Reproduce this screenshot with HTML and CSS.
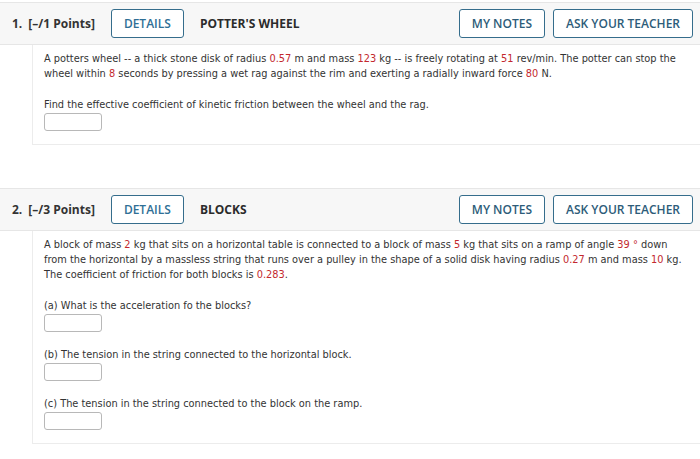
FILE: index.html
```html
<!DOCTYPE html>
<html>
<head>
<meta charset="utf-8">
<link rel="stylesheet" href="styles.css">
</head>
<body>
<div class="page">
  <section class="question">
    <header class="q-head">
      <span class="q-num">1.</span>
      <span class="q-points">[–/1 Points]</span>
      <button class="btn btn-details">DETAILS</button>
      <span class="q-title">POTTER'S WHEEL</span>
      <span class="spacer"></span>
      <button class="btn">MY NOTES</button>
      <button class="btn">ASK YOUR TEACHER</button>
    </header>
    <div class="q-body">
      <p class="txt">A potters wheel -- a thick stone disk of radius <span class="v">0.57</span> m and mass <span class="v">123</span> kg -- is freely rotating at <span class="v">51</span> rev/min. The potter can stop the wheel within <span class="v">8</span> seconds by pressing a wet rag against the rim and exerting a radially inward force <span class="v">80</span> N.</p>
      <div class="part part-first">
        <p class="txt">Find the effective coefficient of kinetic friction between the wheel and the rag.</p>
        <div class="answer"></div>
      </div>
    </div>
  </section>

  <section class="question q2">
    <header class="q-head">
      <span class="q-num">2.</span>
      <span class="q-points">[–/3 Points]</span>
      <button class="btn btn-details">DETAILS</button>
      <span class="q-title">BLOCKS</span>
      <span class="spacer"></span>
      <button class="btn">MY NOTES</button>
      <button class="btn">ASK YOUR TEACHER</button>
    </header>
    <div class="q-body">
      <p class="txt">A block of mass <span class="v">2</span> kg that sits on a horizontal table is connected to a block of mass <span class="v">5</span> kg that sits on a ramp of angle <span class="v">39</span> <span class="v deg">°</span> down from the horizontal by a massless string that runs over a pulley in the shape of a solid disk having radius <span class="v">0.27</span> m and mass <span class="v">10</span> kg. The coefficient of friction for both blocks is <span class="v">0.283</span>.</p>
      <div class="part part-first">
        <p class="txt">(a) What is the acceleration fo the blocks?</p>
        <div class="answer"></div>
      </div>
      <div class="part">
        <p class="txt">(b) The tension in the string connected to the horizontal block.</p>
        <div class="answer"></div>
      </div>
      <div class="part">
        <p class="txt">(c) The tension in the string connected to the block on the ramp.</p>
        <div class="answer"></div>
      </div>
    </div>
  </section>
</div>
</body>
</html>
```

FILE: styles.css
```css
html, body {
  margin: 0;
  padding: 0;
  background: #ffffff;
}

.page {
  padding-top: 2px;
  font-family: "Open Sans", "Liberation Sans", sans-serif;
  color: #333333;
}

.question + .question {
  margin-top: 43px;
}

.q-head {
  display: flex;
  align-items: center;
  height: 41px;
  padding: 0 7px 0 12px;
  background: #f7f7f7;
  border-top: 1px solid #e6e6e6;
  border-bottom: 1px solid #e6e6e6;
}

.q-num {
  font-weight: 700;
  font-size: 12px;
  color: #333;
  margin-right: 6px;
}

.q-points {
  font-weight: 700;
  font-size: 12px;
  color: #333;
  margin-right: 16px;
}

.q-title {
  font-weight: 700;
  font-size: 12px;
  color: #2b2b2b;
  margin-left: 16px;
}

.spacer {
  flex: 1;
}

.btn {
  height: 29px;
  padding: 0 12px;
  margin-left: 8px;
  background: #ffffff;
  border: 1.5px solid #356d8c;
  border-radius: 3px;
  font-family: "Open Sans", "Liberation Sans", sans-serif;
  font-weight: 600;
  font-size: 12px;
  color: #2d5c79;
  cursor: pointer;
}

.btn.btn-details {
  margin-left: 0;
  color: #2f6f96;
}

.q-body {
  margin-left: 32px;
  padding: 6px 8px 13px 11px;
  border-left: 1px solid #ececec;
  border-bottom: 1px solid #ececec;
  font-family: "DejaVu Sans", Verdana, sans-serif;
  font-size: 9.8px;
  line-height: 15px;
  color: #333333;
}

.txt {
  margin: 0;
}

.v {
  color: #c3282e;
}

.part {
  margin-top: 15px;
}

.part-first {
  margin-top: 16px;
}

.answer {
  width: 56px;
  height: 16px;
  margin-top: 1px;
  border: 1px solid #b8b8b8;
  border-radius: 3px;
  background: #ffffff;
}
```
